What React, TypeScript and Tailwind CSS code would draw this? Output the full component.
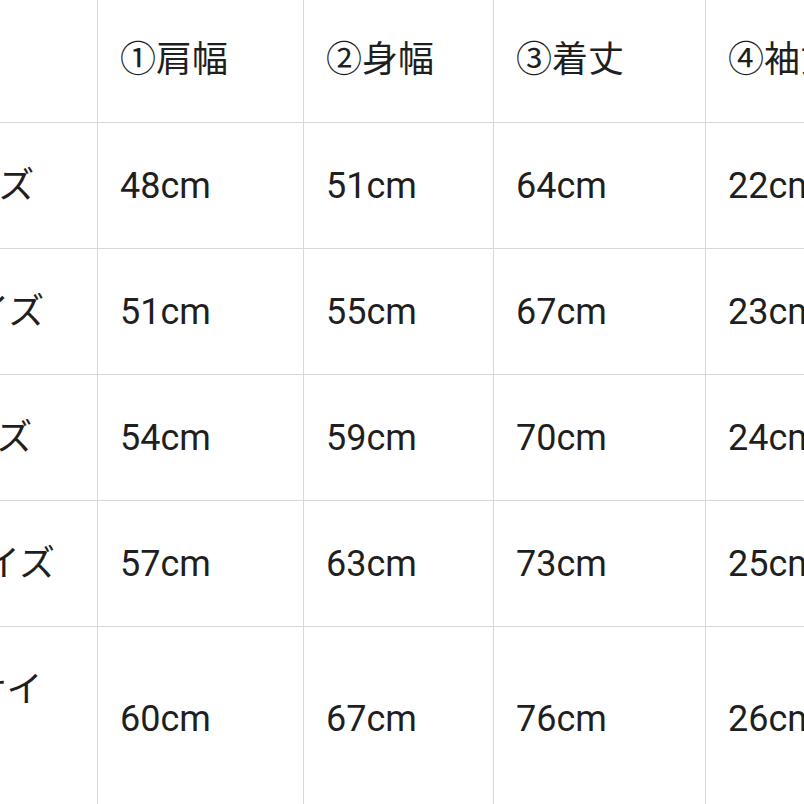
const headers = ["", "①肩幅", "②身幅", "③着丈", "④袖丈"];

const rows = [
  { label: "Sサイズ", values: ["48cm", "51cm", "64cm", "22cm"] },
  { label: "Mサイズ", values: ["51cm", "55cm", "67cm", "23cm"] },
  { label: "Lサイズ", values: ["54cm", "59cm", "70cm", "24cm"] },
  { label: "XLサイズ", values: ["57cm", "63cm", "73cm", "25cm"] },
  { label: "XXLサイズ", values: ["60cm", "67cm", "76cm", "26cm"] },
];

const cell =
  "flex items-center border-r border-b border-[#d8d8d8] pl-[22px] pr-2 leading-[58px]";

export default function App() {
  return (
    <div className="w-[804px] h-[804px] overflow-hidden bg-white">
      <div className="-ml-[116px] w-max grid grid-cols-[214px_206px_190px_212px_220px] text-[36px] text-[#1f1f1f] font-['Roboto','Noto_Sans_CJK_JP',sans-serif]">
        {headers.map((h, i) => (
          <div key={i} className={`${cell} h-[123px] pb-[3px]`}>
            {h}
          </div>
        ))}
        {rows.map((row, r) => {
          const last = r === rows.length - 1;
          return [
            <div
              key={`l${r}`}
              className={`${cell} ${last ? "h-[184px]" : "h-[126px]"}`}
            >
              {last ? (
                <span>
                  XXLサイ
                  <br />ズ
                </span>
              ) : (
                row.label
              )}
            </div>,
            ...row.values.map((v, c) => (
              <div
                key={`${r}-${c}`}
                className={`${cell} ${last ? "h-[184px]" : "h-[126px]"}`}
              >
                {v}
              </div>
            )),
          ];
        })}
      </div>
    </div>
  );
}
